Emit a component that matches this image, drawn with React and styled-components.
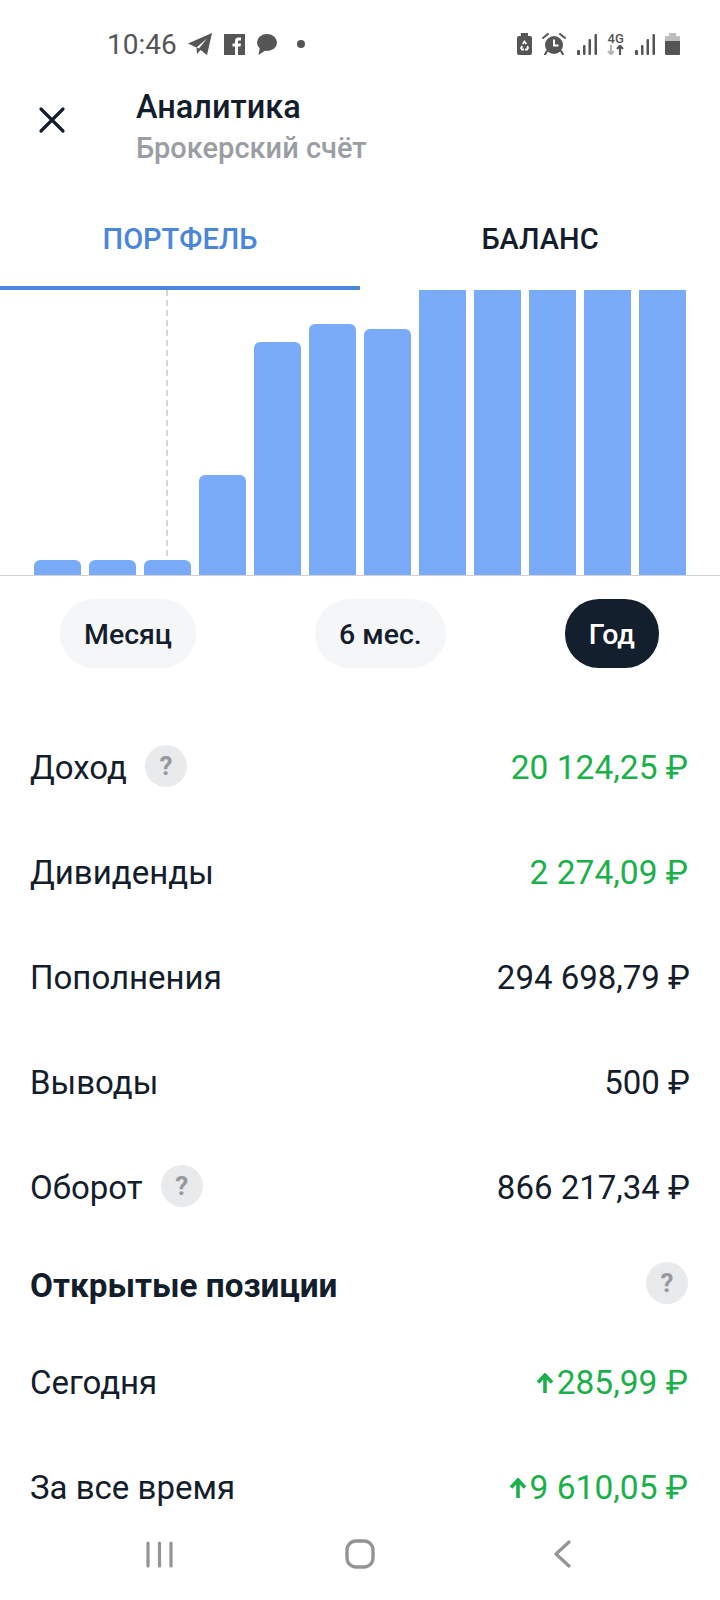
import React from 'react';
import styled, { createGlobalStyle } from 'styled-components';

const GlobalStyle = createGlobalStyle`
  html, body {
    margin: 0;
    padding: 0;
    background: #fff;
  }
  * {
    box-sizing: border-box;
  }
`;

const Screen = styled.div`
  width: 720px;
  height: 1600px;
  display: flex;
  flex-direction: column;
  overflow: hidden;
  background: #fff;
  color: #141d2b;
  font-family: Roboto, "Liberation Sans", sans-serif;
`;

const StatusBar = styled.div`
  height: 88px;
  flex: none;
  display: flex;
  align-items: center;
  justify-content: space-between;
  padding: 0 40px 0 107px;
  color: #555;
`;

const StatusGroup = styled.div`
  display: flex;
  align-items: center;
  gap: ${p => p.$gap || 12}px;
`;

const Clock = styled.span`
  font-size: 28px;
  width: 69px;
`;

const NetType = styled.div`
  width: 17px;
  display: flex;
  flex-direction: column;
  align-items: center;
  font-size: 13px;
  font-weight: 500;
  line-height: 12px;
`;

const Header = styled.div`
  height: 100px;
  flex: none;
  display: flex;
  padding-left: 36px;
`;

const CloseBox = styled.div`
  width: 100px;
  padding-top: 16px;
  flex: none;
`;

const TitleBlock = styled.div`
  display: flex;
  flex-direction: column;
`;

const Title = styled.div`
  font-size: 32.5px;
  font-weight: 500;
  line-height: 38px;
`;

const Subtitle = styled.div`
  font-size: 29px;
  font-weight: 500;
  line-height: 44px;
  color: #9a9ea3;
`;

const Tabs = styled.div`
  height: 102px;
  flex: none;
  display: flex;
`;

const Tab = styled.div`
  width: 360px;
  display: flex;
  align-items: center;
  justify-content: center;
  padding-top: 4px;
  font-size: 29px;
  font-weight: 500;
  color: ${p => (p.$active ? '#4a86dc' : '#141d2b')};
  border-bottom: 4px solid ${p => (p.$active ? '#4a86dc' : 'transparent')};
`;

const Chart = styled.div`
  position: relative;
  height: 286px;
  flex: none;
  display: flex;
  align-items: flex-end;
  gap: 8px;
  padding: 0 34px;
  border-bottom: 1px solid #cfd1d4;
`;

const Bar = styled.div`
  width: 47px;
  background: #7aabf9;
  border-radius: ${p => (p.$full ? 0 : '6px 6px 0 0')};
`;

const Marker = styled.div`
  position: absolute;
  left: 166px;
  top: 0;
  bottom: 15px;
  width: 2px;
  background: repeating-linear-gradient(to bottom, #d5d6d8 0 6px, transparent 6px 10px);
`;

const Periods = styled.div`
  flex: none;
  display: flex;
  justify-content: space-between;
  padding: 23px 61px 0 60px;
`;

const Period = styled.div`
  height: 69px;
  padding: 2px 24px 0;
  display: flex;
  align-items: center;
  border-radius: 34px;
  font-size: 28.5px;
  font-weight: 500;
  background: ${p => (p.$active ? '#141f2e' : '#f5f6f8')};
  color: ${p => (p.$active ? '#fff' : '#141d2b')};
`;

const List = styled.div`
  padding: 47px 30px 0 30px;
  display: flex;
  flex-direction: column;
  flex: 1;
  min-height: 0;
`;

const Row = styled.div`
  height: ${p => p.$h || 105}px;
  flex: none;
  display: flex;
  align-items: center;
  justify-content: space-between;
  font-size: 33px;
`;

const Label = styled.div`
  display: flex;
  align-items: center;
  gap: 18px;
`;

const Heading = styled.div`
  font-weight: 700;
  font-size: 33.3px;
`;

const Value = styled.div`
  display: flex;
  align-items: center;
  gap: 3px;
  font-size: ${p => (p.$green ? 33.5 : 33)}px;
  padding-right: ${p => (p.$green ? 2 : 0)}px;
  color: ${p => (p.$green ? '#1bb04a' : '#141d2b')};
`;

const Help = styled.div`
  width: 42px;
  height: 42px;
  margin: -4px ${p => (p.$end ? 2 : 0)}px 0 0;
  border-radius: 50%;
  display: flex;
  align-items: center;
  justify-content: center;
  background: #e9eaec;
  color: #95989d;
  font-size: 26px;
  font-weight: 700;
`;

const NavBar = styled.div`
  height: 70px;
  flex: none;
  display: grid;
  grid-template-columns: 201px 200px 204px;
  align-items: center;
  justify-items: center;
  padding: 0 0 22px 59px;
  background: #fff;
`;

const Telegram = () => (
  <svg width="24" height="22" viewBox="0 0 24 22">
    <path d="M24 0 L19 22 L12.5 17 L9 21 L8.5 14.5 L0 10.5 Z" fill="#555" />
    <path d="M8.5 14.5 L19 5.5 L11 15.5 Z" fill="#fff" />
  </svg>
);

const Facebook = () => (
  <svg width="21" height="21" viewBox="0 0 21 21">
    <rect width="21" height="21" fill="#555" />
    <path d="M11 21 V12.5 H8.5 V9.5 H11 V7 Q11 3.5 14.5 3.5 H17 V6.5 H15 Q14 6.5 14 7.5 V9.5 H17 L16.5 12.5 H14 V21 Z" fill="#fff" />
  </svg>
);

const Chat = () => (
  <svg width="20" height="21" viewBox="0 0 20 21">
    <ellipse cx="10" cy="8.5" rx="10" ry="8.5" fill="#555" />
    <path d="M3 13 L1.5 21 L9 16 Z" fill="#555" />
  </svg>
);

const Dot = () => (
  <svg width="8" height="8" viewBox="0 0 8 8" style={{ marginLeft: 8 }}>
    <circle cx="4" cy="4" r="4" fill="#555" />
  </svg>
);

const RecycleBattery = () => (
  <svg width="15" height="22" viewBox="0 0 15 22">
    <path d="M4 0 H11 V3 H13 Q15 3 15 5 V20 Q15 22 13 22 H2 Q0 22 0 20 V5 Q0 3 2 3 H4 Z" fill="#555" />
    <path d="M7.5 7 L10 10.5 L8.5 11.5 L7.5 10 L6.3 11.5 L5 10.5 Z M3 15 L4.5 12.5 L6 13.5 L5 15.5 H7 V17.5 H4.5 Z M8 15.5 H10 L9.5 13.5 L11 12.5 L12 15 L10.5 17.5 H8 Z" fill="#fff" />
  </svg>
);

const Alarm = () => (
  <svg width="24" height="22" viewBox="0 0 24 22">
    <path d="M1 5 L6 1 M23 5 L18 1" stroke="#555" strokeWidth="2" strokeLinecap="round" />
    <path d="M5 18 L3 21.5 M19 18 L21 21.5" stroke="#555" strokeWidth="2" strokeLinecap="round" />
    <circle cx="12" cy="12" r="9" fill="#555" />
    <path d="M12 6.5 V12.5 H16.5" stroke="#fff" strokeWidth="2" fill="none" />
  </svg>
);

const Signal = () => (
  <svg width="20" height="21" viewBox="0 0 20 21">
    <rect x="0" y="16" width="3" height="5" rx="1" fill="#555" />
    <rect x="6" y="11" width="2.5" height="10" rx="1" fill="#555" />
    <rect x="11.5" y="5" width="2.5" height="16" rx="1" fill="#555" />
    <rect x="17.5" y="0" width="2.5" height="21" rx="1" fill="#555" />
  </svg>
);

const NetArrows = () => (
  <svg width="17" height="10" viewBox="0 0 17 10">
    <path d="M4 0 V9 M1 6 L4 9.5 L7 6" stroke="#b5b5b5" strokeWidth="2" fill="none" />
    <path d="M13 10 V1 M10 4 L13 0.5 L16 4" stroke="#555" strokeWidth="2" fill="none" />
  </svg>
);

const Battery = () => (
  <svg width="15" height="22" viewBox="0 0 15 22">
    <path d="M4 0 H11 V3 H14 Q15 3 15 4 V8 H0 V4 Q0 3 1 3 H4 Z" fill="#bdbdbd" />
    <path d="M0 8 H15 V21 Q15 22 14 22 H1 Q0 22 0 21 Z" fill="#555" />
  </svg>
);

const CloseIcon = () => (
  <svg width="32" height="32" viewBox="0 0 32 32">
    <path d="M5 5 L27 27 M27 5 L5 27" stroke="#141d2b" strokeWidth="3.2" strokeLinecap="round" />
  </svg>
);

const UpArrow = () => (
  <svg width="18" height="20" viewBox="0 0 18 20">
    <path d="M9 20 V3 M2 9.5 L9 2 L16 9.5" stroke="#1bb04a" strokeWidth="3.6" fill="none" />
  </svg>
);

const RecentsIcon = () => (
  <svg width="27" height="27" viewBox="0 0 27 27">
    <path d="M2 2 V25 M13.5 2 V25 M25 2 V25" stroke="#949494" strokeWidth="3.2" strokeLinecap="round" />
  </svg>
);

const HomeIcon = () => (
  <svg width="30" height="30" viewBox="0 0 30 30">
    <rect x="2" y="2" width="26" height="26" rx="9" stroke="#949494" strokeWidth="3.4" fill="none" />
  </svg>
);

const BackIcon = () => (
  <svg width="18" height="28" viewBox="0 0 18 28">
    <path d="M16 2 L3 14 L16 26" stroke="#949494" strokeWidth="3.2" fill="none" strokeLinecap="round" strokeLinejoin="round" />
  </svg>
);

const bars = [15, 15, 15, 100, 233, 251, 246, 285, 285, 285, 285, 285];

const rows = [
  { label: 'Доход', help: true, value: '20 124,25 ₽', green: true },
  { label: 'Дивиденды', value: '2 274,09 ₽', green: true },
  { label: 'Пополнения', value: '294 698,79 ₽' },
  { label: 'Выводы', value: '500 ₽' },
  { label: 'Оборот', help: true, value: '866 217,34 ₽' },
];

const App = () => {
  return (
    <>
      <GlobalStyle />
      <Screen>
        <StatusBar>
          <StatusGroup>
            <Clock>10:46</Clock>
            <Telegram />
            <Facebook />
            <Chat />
            <Dot />
          </StatusGroup>
          <StatusGroup $gap={10.4}>
            <RecycleBattery />
            <Alarm />
            <Signal />
            <NetType>
              4G
              <NetArrows />
            </NetType>
            <Signal />
            <Battery />
          </StatusGroup>
        </StatusBar>

        <Header>
          <CloseBox>
            <CloseIcon />
          </CloseBox>
          <TitleBlock>
            <Title>Аналитика</Title>
            <Subtitle>Брокерский счёт</Subtitle>
          </TitleBlock>
        </Header>

        <Tabs>
          <Tab $active>ПОРТФЕЛЬ</Tab>
          <Tab>БАЛАНС</Tab>
        </Tabs>

        <Chart>
          <Marker />
          {bars.map((h, i) => (
            <Bar key={i} $full={h === 285} style={{ height: h }} />
          ))}
        </Chart>

        <Periods>
          <Period>Месяц</Period>
          <Period>6 мес.</Period>
          <Period $active>Год</Period>
        </Periods>

        <List>
          {rows.map(row => (
            <Row key={row.label}>
              <Label>
                {row.label}
                {row.help && <Help>?</Help>}
              </Label>
              <Value $green={row.green}>{row.value}</Value>
            </Row>
          ))}
          <Row $h={90}>
            <Heading>Открытые позиции</Heading>
            <Help $end>?</Help>
          </Row>
          <Row>
            <Label>Сегодня</Label>
            <Value $green>
              <UpArrow />
              285,99 ₽
            </Value>
          </Row>
          <Row>
            <Label>За все время</Label>
            <Value $green>
              <UpArrow />
              9 610,05 ₽
            </Value>
          </Row>
        </List>

        <NavBar>
          <RecentsIcon />
          <HomeIcon />
          <BackIcon />
        </NavBar>
      </Screen>
    </>
  );
};

export default App;
